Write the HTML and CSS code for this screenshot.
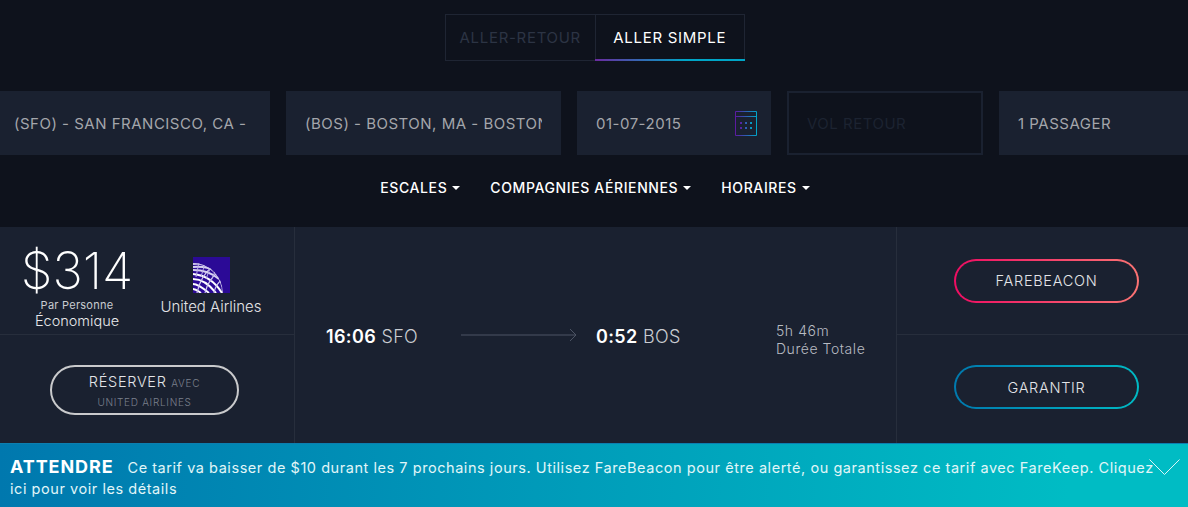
FILE: index.html
```html
<!DOCTYPE html>
<html lang="fr">
<head>
<meta charset="utf-8">
<title>Vols</title>
<link rel="stylesheet" href="styles.css">
</head>
<body>
<header class="search">
  <div class="tabs">
    <div class="tab">ALLER-RETOUR</div>
    <div class="tab tab-active">ALLER SIMPLE</div>
  </div>
  <div class="fields">
    <div class="field field-wide"><span class="clip">(SFO) - SAN FRANCISCO, CA - SAN FRANCISCO</span></div>
    <div class="field field-wide"><span class="clip">(BOS) - BOSTON, MA - BOSTON LOGAN</span></div>
    <div class="field field-date">
      <span class="clip">01-07-2015</span>
      <svg class="cal" width="22" height="25" viewBox="0 0 22 25" fill="none">
        <defs><linearGradient id="calg" x1="0" y1="0" x2="1" y2="0"><stop offset="0" stop-color="#5c1aa0"/><stop offset="1" stop-color="#00a4c8"/></linearGradient></defs>
        <path d="M.5.5h21v24h-21zM.5 5.500h21" stroke="url(#calg)" stroke-width="1"/>
        <path d="M5 11h2v2H5zM10 11h2v2h-2zM15 11h2v2h-2zM5 16h2v2H5zM10 16h2v2h-2zM15 16h2v2h-2z" fill="url(#calg)"/>
      </svg>
    </div>
    <div class="field field-off"><span class="clip">VOL RETOUR</span></div>
    <div class="field"><span class="clip">1 PASSAGER</span></div>
  </div>
  <nav class="filters">
    <span class="filter">ESCALES<i class="caret"></i></span>
    <span class="filter">COMPAGNIES AÉRIENNES<i class="caret"></i></span>
    <span class="filter">HORAIRES<i class="caret"></i></span>
  </nav>
</header>

<section class="card">
  <div class="col col-left">
    <div class="cell summary">
      <div class="price">
        <div class="amount">$314</div>
        <div class="per">Par Personne</div>
        <div class="cabin">Économique</div>
      </div>
      <div class="airline">
        <svg class="logo" width="37" height="36" viewBox="0 0 37 36">
          <defs><clipPath id="globe"><circle cx="0" cy="36" r="30"/></clipPath></defs>
          <rect width="37" height="36" fill="#2b0a96"/>
          <g clip-path="url(#globe)" fill="none">
            <path stroke="#fff" stroke-width="2" d="M0 17c11 1 21 6 29 19M0 22c8 0 16 5 23 14M0 27c5 0 10 4 16 9M0 32c3 0 5 2 8 4"/>
            <path stroke="#cfc8ee" stroke-width="1.200" d="M4 36C6 26 11 16 20 9M12 36c2-9 7-17 15-22M21 36c1-6 4-11 9-14"/>
            <path stroke="#d8d2f0" stroke-width="1.800" d="M0 7c8-1 13 0 18 2M0 10c10-1 17 1 23 4M0 13c10 0 19 3 26 9"/>
            <path stroke="#b9aee6" stroke-width="1" d="M3 20l3-15M8 20l4-14M13 22l5-13M18 24l5-12"/>
            <circle cx="0" cy="36" r="29.500" stroke="#c8c0ea" stroke-width="1"/>
          </g>
        </svg>
        <div class="airline-name">United Airlines</div>
      </div>
    </div>
    <div class="cell action action-book">
      <a class="pill pill-book">
        <span class="book-main">RÉSERVER <small>AVEC</small></span>
        <small class="book-sub">UNITED AIRLINES</small>
      </a>
    </div>
  </div>
  <div class="col col-mid">
    <div class="stop"><b>16:06</b> SFO</div>
    <svg class="arrow" width="117" height="16" viewBox="0 0 117 16" fill="none" stroke="#4c5464"><path d="M0 8h115M109 2l6 6-6 6"/></svg>
    <div class="stop stop-end"><b>0:52</b> BOS</div>
    <div class="duration">5h 46m<br>Durée Totale</div>
  </div>
  <div class="col col-right">
    <div class="cell action top-action"><a class="pill pill-beacon">FAREBEACON</a></div>
    <div class="cell action bottom-action"><a class="pill pill-keep">GARANTIR</a></div>
  </div>
</section>

<footer class="banner">
  <p class="banner-text"><strong>ATTENDRE</strong>Ce tarif va baisser de $10 durant les 7 prochains jours. Utilisez FareBeacon pour être alerté, ou garantissez ce tarif avec FareKeep. Cliquez ici pour voir les détails</p>
  <svg class="chev" width="31" height="17" viewBox="0 0 31 17" fill="none" stroke="#d8f6f8"><path d="M.5.5l15 15 15-15"/></svg>
</footer>
</body>
</html>
```
FILE: styles.css
```css
* { box-sizing: border-box; }
html, body { margin: 0; height: 100%; }
body {
  width: 1188px;
  height: 507px;
  overflow: hidden;
  background: #0e121c;
  font-family: Inter, "Liberation Sans", sans-serif;
  display: flex;
  flex-direction: column;
}
.search { height: 227px; padding-top: 14px; display: flex; flex-direction: column; align-items: center; }
.tabs { display: flex; width: 300px; height: 47px; margin-left: 2px; }
.tab {
  flex: 1;
  display: flex;
  align-items: center;
  justify-content: center;
  border: 1px solid #1f2533;
  font-size: 15px;
  letter-spacing: .7px;
  color: #2c3444;
  font-weight: 400;
}
.tab + .tab { border-left: 0; }
.tab-active {
  position: relative;
  color: #fff;
}
.tab-active::after {
  content: "";
  position: absolute;
  left: -1px;
  right: -1px;
  bottom: -1px;
  height: 2px;
  background: linear-gradient(90deg, #6a2a9e, #00a5c6 60%);
}
.fields {
  display: flex;
  flex-shrink: 0;
  align-self: center;
  gap: 16px;
  margin-top: 30px;
  width: 1198px;
}
.field {
  flex: 0 0 194px;
  min-width: 0;
  height: 64px;
  padding: 0 19px;
  background: #1a2130;
  color: #a4a6ab;
  font-size: 15px;
  letter-spacing: .5px;
  font-weight: 400;
  display: flex;
  align-items: center;
  justify-content: space-between;
}
.field-wide { flex-basis: 275px; }
.field-date { padding-right: 14px; }
.field-off { flex-basis: 196px; background: transparent; border: 2px solid #1a2130; color: #1c2331; padding-left: 18px; }
.clip { overflow: hidden; white-space: nowrap; display: block; flex: 1; min-width: 0; }
.cal { flex: none; margin-top: 1px; }
.filters { display: flex; gap: 30px; margin-top: 25px; margin-left: 2px; }
.filter { color: #fff; font-size: 14px; letter-spacing: .62px; font-weight: 500; display: flex; align-items: center; line-height: 16px; }
.caret { width: 0; height: 0; margin-left: 5px; border: 4px solid transparent; border-top-color: #fff; border-bottom: 0; }

.card {
  height: 216px;
  background: #1a2130;
  display: grid;
  grid-template-columns: 295px 601px 1fr;
}
.col { display: flex; flex-direction: column; }
.col-left { border-right: 1px solid #272e3c; }
.col-right { border-left: 1px solid #272e3c; }
.cell { flex: 1; display: flex; }
.cell + .cell { border-top: 1px solid #272e3c; }
.summary { justify-content: flex-start; padding: 16px 0 0 22px; gap: 28px; flex: 0 0 107px; }
.price { width: 110px; text-align: center; color: #fff; display: flex; flex-direction: column; align-items: center; }
.amount { font-size: 51px; line-height: 55px; font-weight: 200; }
.per { font-size: 11px; line-height: 14px; color: #c9ccd1; letter-spacing: .25px; }
.cabin { font-size: 14.500px; line-height: 18px; color: #e8e9eb; font-weight: 300; }
.airline { display: flex; flex-direction: column; align-items: center; padding-top: 14px; color: #e4e5e8; width: 102px; }
.logo { display: block; }
.airline-name { font-size: 15px; margin-top: 5px; line-height: 18px; white-space: nowrap; font-weight: 300; }
.action { align-items: center; justify-content: center; }
.top-action { flex: 0 0 107px; padding-left: 8px; }
.bottom-action { padding: 0 0 4px 8px; }
.action-book { padding: 2px 5px 0 0; }
.pill {
  display: flex;
  flex-direction: column;
  align-items: center;
  justify-content: center;
  border-radius: 25px;
  border: 2px solid #c9cacc;
  color: #e4e5e8;
  font-size: 14.500px;
  letter-spacing: .7px;
  font-weight: 300;
}
.pill-book { width: 189px; height: 50px; padding-top: 2px; }
.book-main { line-height: 17px; }
.book-main small { font-size: 10px; color: #7a808d; }
.book-sub { font-size: 10px; color: #7a808d; line-height: 16px; margin-top: 2px; }
.pill-beacon, .pill-keep { width: 185px; height: 44px; border-color: transparent; border-radius: 22px; }
.pill-beacon { background: linear-gradient(#1a2130, #1a2130) padding-box, linear-gradient(90deg, #ee0d62, #fb7373) border-box; }
.pill-keep { background: linear-gradient(#1a2130, #1a2130) padding-box, linear-gradient(90deg, #0079ae, #00bac4) border-box; }
.col-mid { flex-direction: row; align-items: center; padding: 0 0 0 31px; height: 216px; }
.stop { font-size: 18px; color: #c9ccd1; font-weight: 300; letter-spacing: .35px; white-space: nowrap; width: 135px; padding-top: 2px; }
.stop b { color: #fff; font-weight: 600; }
.arrow { flex: none; }
.stop-end { margin-left: 18px; width: 180px; }
.duration { font-size: 14px; line-height: 18px; color: #b8bbc2; font-weight: 300; letter-spacing: .55px; white-space: nowrap; margin-top: 10px; }

.banner {
  flex: 1;
  position: relative;
  padding: 13px 20px 0 10px;
  background: linear-gradient(90deg, #0078ae, #00bcc4 90%);
  color: #e0f6f8;
  border-top: 1px solid #0c7fb0;
}
.banner-text { margin: 0; font-size: 14.500px; line-height: 21px; letter-spacing: .55px; font-weight: 400; }
.banner-text strong { font-size: 18px; line-height: 1; font-weight: 700; color: #fff; margin-right: 14px; letter-spacing: .9px; }
.chev { position: absolute; right: 8px; top: 15px; }
```
